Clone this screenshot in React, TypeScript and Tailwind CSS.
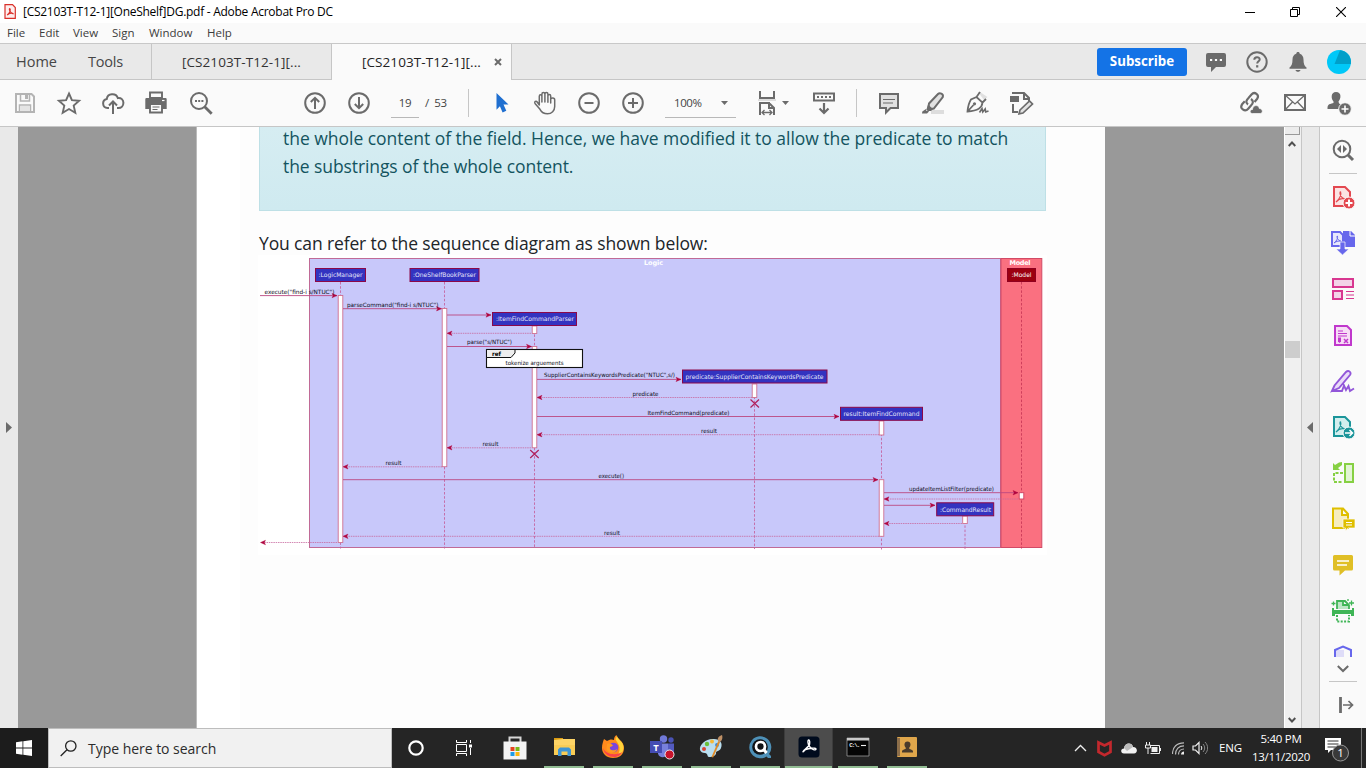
import React from "react";

const G = "#6b6b6b";

function Ic({ children, w = 24, h = 24 }: { children: React.ReactNode; w?: number; h?: number }) {
  return (
    <svg width={w} height={h} viewBox={`0 0 ${w} ${h}`} fill="none" className="block shrink-0 overflow-visible">
      {children}
    </svg>
  );
}

function Cell({ children }: { children: React.ReactNode }) {
  return <div className="flex w-[44px] shrink-0 justify-center">{children}</div>;
}

function TitleBar() {
  return (
    <div className="flex h-[23px] items-center bg-white">
      <div className="ml-[4px] w-[12px]">
        <svg width="12" height="15" viewBox="0 0 12 15" fill="none" className="block">
          <path d="M1 .7h7.5L11.3 3.500v10.800H1z" fill="#fdeeee" stroke="#d9302a" strokeWidth="1.200" />
          <path d="M3.200 11c3-2 3.500-5.500 2.700-6.300-1-.4-.8 3.800 3.600 5.200-1.800-1-4.500-.6-6.300 1.100z" stroke="#d9302a" strokeWidth="1.200" />
        </svg>
      </div>
      <span className="ml-[7px] w-[1200px] whitespace-nowrap text-[12px] leading-[23px] tracking-[-0.27px] text-black">
        [CS2103T-T12-1][OneShelf]DG.pdf - Adobe Acrobat Pro DC
      </span>
      <div className="ml-auto flex w-[139px] shrink-0 items-center">
        <div className="flex w-[46px] justify-center"><svg width="10" height="10" viewBox="0 0 10 10"><path d="M0 5.500h10" stroke="#000" /></svg></div>
        <div className="flex w-[44px] justify-center"><svg width="10" height="10" viewBox="0 0 10 10" fill="none"><path d="M.5 2.500h7v7h-7zM2.500 2.500v-2h7v7h-2" stroke="#000" /></svg></div>
        <div className="flex w-[48px] justify-center"><svg width="10" height="10" viewBox="0 0 10 10"><path d="M0 0l10 10M10 0L0 10" stroke="#000" strokeWidth="1.100" /></svg></div>
      </div>
    </div>
  );
}

function MenuBar() {
  return (
    <div className="flex h-[21px] border-b border-[#c8c8c8] bg-[#fafafa] pl-[7px] text-[11.500px] leading-[20px] text-[#3c3c3c]">
      <span className="w-[32px]">File</span>
      <span className="w-[34px]">Edit</span>
      <span className="w-[39px]">View</span>
      <span className="w-[37px]">Sign</span>
      <span className="w-[58px]">Window</span>
      <span>Help</span>
    </div>
  );
}

function TabBar() {
  return (
    <div className="flex h-[36px] bg-[#e9e9e9] text-[#464646]">
      <div className="flex w-[152px] shrink-0 border-r border-b border-[#c6c6c6] pl-[16px] text-[14.500px] leading-[35px]">
        <span className="w-[72px]">Home</span>
        <span className="tracking-[-0.2px]">Tools</span>
      </div>
      <div className="w-[180px] shrink-0 whitespace-nowrap border-r border-b border-[#c6c6c6] pl-[30px] text-[13.500px] leading-[36px] tracking-[0.08px] text-[#333]">[CS2103T-T12-1][...</div>
      <div className="flex w-[180px] shrink-0 items-center border-r border-[#c6c6c6] bg-[#fafafa] pl-[30px] text-[13.500px] leading-[36px] tracking-[0.08px] text-[#222]">
        <span className="w-[132px] whitespace-nowrap">[CS2103T-T12-1][...</span>
        <svg width="8" height="8" viewBox="0 0 8 8"><path d="M1 1l6 6M7 1L1 7" stroke="#6b6b6b" strokeWidth="2" /></svg>
      </div>
      <div className="flex flex-1 items-center border-b border-[#c6c6c6]">
        <div className="ml-[585px] flex h-[28px] w-[90px] shrink-0 items-center justify-center rounded-[3px] bg-[#1473e6] text-[13.300px] font-bold text-white">Subscribe</div>
        <div className="ml-[8px] flex shrink-0">
          <div className="flex w-[41px] justify-center">
            <Ic><path d="M4 3h16a2 2 0 0 1 2 2v10a2 2 0 0 1-2 2h-8l-5 5v-5H4a2 2 0 0 1-2-2V5a2 2 0 0 1 2-2z" fill={G} /><path d="M6 10h2.200M10.900 10h2.200M15.800 10H18" stroke="#fff" strokeWidth="2" /></Ic>
          </div>
          <div className="flex w-[41px] justify-center">
            <Ic><circle cx="12" cy="12" r="9.700" stroke={G} strokeWidth="2" /><path d="M9.300 9.800c0-3.400 5.400-3.400 5.400-.4 0 1.800-2.500 2-2.500 4.100" stroke={G} strokeWidth="2" /><path d="M11.100 15.200h2.200v2.300h-2.200z" fill={G} /></Ic>
          </div>
          <div className="flex w-[41px] justify-center">
            <Ic><path d="M12 2c1.100 0 1.700.7 1.700 1.700 2.600.8 3.800 3 3.800 5.800 0 4.200.8 6.500 3 8.100v1.100H3.500v-1.100c2.200-1.600 3-3.900 3-8.100 0-2.800 1.200-5 3.800-5.800C10.300 2.700 10.900 2 12 2zM9.500 20h5c-.3 2.400-4.700 2.400-5 0z" fill={G} /></Ic>
          </div>
          <div className="flex w-[42px] justify-center">
            <Ic><circle cx="12" cy="12" r="12" fill="#00c8f8" /><path d="M7.500 14L13 .2A12 12 0 0 1 23.800 14z" fill="#009fc9" /></Ic>
          </div>
        </div>
      </div>
    </div>
  );
}

function Toolbar() {
  return (
    <div className="flex h-[47px] items-center border-b border-[#c6c6c6] bg-[#fafafa] pl-[3px] text-[11.500px] text-[#444]">
      <Cell><Ic><path d="M3 3h15.500L21 5.500V21H3z" stroke="#b4b4b4" strokeWidth="2" /><path d="M7.500 3v7h9V3M6.500 21v-7h11v7" stroke="#b4b4b4" strokeWidth="1.500" /><path d="M12 4h3v4h-3z" fill="#b4b4b4" /><path d="M7 15h10v5H7z" fill="#e4e4e4" /></Ic></Cell>
      <Cell><Ic><path d="M12 2.500l2.900 6.600 7.200.7-5.400 4.800 1.600 7.100L12 18l-6.300 3.700 1.600-7.100L1.900 9.800l7.200-.7z" stroke={G} strokeWidth="1.900" /></Ic></Cell>
      <Cell><Ic><path d="M8 17H6.500a4.600 4.600 0 0 1-.7-9.100C6.500 2.200 15 1.500 16.800 7c3.400-.6 5.600 2 5.600 4.700 0 3-2 5.300-5 5.300H16" stroke={G} strokeWidth="2" /><path d="M12 23V11M8 14.500l4-4 4 4" stroke={G} strokeWidth="2" /></Ic></Cell>
      <Cell><div className="mr-[2px]"><Ic><path d="M6 1.500h12V7H6z" stroke={G} strokeWidth="1.900" /><path d="M2.500 7h19a1.200 1.200 0 0 1 1.200 1.200V18H1.300V8.200A1.200 1.200 0 0 1 2.500 7z" fill={G} /><path d="M6 13h12v8.500H6z" fill="#fafafa" stroke={G} strokeWidth="1.900" /><path d="M8.500 16h7M8.500 18.500h5" stroke={G} /><path d="M18 9.500h2.500" stroke="#fff" strokeWidth="1.200" /></Ic></div></Cell>
      <Cell><Ic><circle cx="10" cy="10" r="8" stroke={G} strokeWidth="2" /><path d="M15.700 15.700l7 7" stroke={G} strokeWidth="2.800" /><path d="M6 10h2M9.200 10h2M12.400 10h2" stroke={G} strokeWidth="2" /></Ic></Cell>
      <div className="w-[70px]" />
      <Cell><Ic><circle cx="12" cy="12" r="9.800" stroke={G} strokeWidth="2" /><path d="M12 18V7M7.800 11l4.200-4.200 4.200 4.200" stroke={G} strokeWidth="2" /></Ic></Cell>
      <Cell><Ic><circle cx="12" cy="12" r="9.800" stroke={G} strokeWidth="2" /><path d="M12 6v11M7.800 13l4.200 4.200 4.200-4.200" stroke={G} strokeWidth="2" /></Ic></Cell>
      <div className="ml-[10px] mt-px flex h-[28px] w-[28px] items-center justify-center border-b border-[#b8b8b8] tracking-[-0.4px]">19</div>
      <span className="ml-[6px] w-[43px] whitespace-pre tracking-[-0.3px]">/  53</span>
      <div className="h-[28px] w-px bg-[#c6c6c6]" />
      <div className="w-[10px]" />
      <Cell><Ic><path d="M7.500 2l12 11.600h-5l2.800 6.200-3.700 1.600-2.700-6.100-3.400 3.500z" fill="#1f6fd0" /></Ic></Cell>
      <Cell><Ic><path d="M6.300 14V5.200c0-2 2.600-2 2.600 0V11 3.200c0-2.200 3-2.200 3 0V11 3c0-2.100 3-2.100 3 0v8.300V5c0-2 2.800-2 2.800 0v7-3.500c0-2 4-2 4 .5v6.500c0 4-3 7.300-7.200 7.300-4 0-6-1.500-7.500-4.500L2 12.500c-1-1.900 1-3 2.200-1.500z" stroke={G} strokeWidth="1.500" strokeLinejoin="round" /></Ic></Cell>
      <Cell><Ic><circle cx="12" cy="12" r="9.800" stroke={G} strokeWidth="2" /><path d="M7.500 12h9" stroke={G} strokeWidth="2" /></Ic></Cell>
      <Cell><Ic><circle cx="12" cy="12" r="9.800" stroke={G} strokeWidth="2" /><path d="M7 12h10M12 7v10" stroke={G} strokeWidth="2" /></Ic></Cell>
      <div className="ml-[10px] mt-px flex h-[28px] w-[71px] items-center justify-between border-b border-[#b8b8b8] pr-[8px] pl-[9px]">
        <span className="tracking-[-0.45px]">100%</span>
        <svg width="7" height="4" viewBox="0 0 7 4"><path d="M0 0h7L3.500 4z" fill={G} /></svg>
      </div>
      <div className="ml-[22px] flex w-[32px] items-center gap-[6px]">
        <Ic w={18}><path d="M2 0v7h14V0" stroke={G} strokeWidth="2" /><path d="M0 9h18" stroke="#ddd" strokeWidth="2" /><path d="M2 24V12h9l5 5v7M11 11v6h5" stroke={G} strokeWidth="2" /><path d="M4 21.500h10M6.500 19L4 21.500 6.500 24M11.500 19l2.500 2.500-2.500 2.500" stroke={G} strokeWidth="1.300" /></Ic>
        <svg width="7" height="4" viewBox="0 0 7 4" className="shrink-0"><path d="M0 0h7L3.500 4z" fill={G} /></svg>
      </div>
      <div className="ml-[22px] mr-[20px]"><Ic><path d="M2 2.500h20v7H2z" stroke={G} strokeWidth="2" /><path d="M5 6h14" stroke={G} strokeWidth="2" strokeDasharray="2 2" /><path d="M12 12v9.500M7.500 17.500l4.500 4.500 4.500-4.500" stroke={G} strokeWidth="2.200" /></Ic></div>
      <div className="h-[28px] w-px bg-[#c6c6c6]" />
      <div className="w-[10px]" />
      <Cell><Ic><path d="M3 3h18v14h-7.500L9 21.500V17H3z" fill="#e1e1e1" stroke={G} strokeWidth="2" /><path d="M6 8.500h12M6 12h10" stroke={G} strokeWidth="1.200" /></Ic></Cell>
      <Cell><Ic><path d="M10 19h13v4H10z" fill="#ddd" /><path d="M8 12.500L17 3c1.500-1.600 5.800-.6 4.800 3l-9 11.500-5.500 1z" fill="#e1e1e1" stroke={G} strokeWidth="2" /><path d="M7 13.500l5 4.500-2 2-5-.2zM5 18l-3.700 2.500L1 22.500h5l2-2z" fill={G} /></Ic></Cell>
      <Cell><Ic><path d="M13 1l6 8 3.500-3L15 1z" fill="#e0e0e0" /><path d="M2.500 20.500C3 15 4 11.500 6 8.500L11.500 6l6 5.500C17 17 13 19.500 2.500 20.500zM2.500 20.500L8.500 14M11.500 6L15 1M17.500 11.500L21 8" stroke={G} strokeWidth="1.800" /><circle cx="9.500" cy="12.800" r="1.600" fill={G} /><path d="M14.500 21.500l2.500-4 .8 3.500 2.400-3 .5 3 2.800-1" stroke={G} strokeWidth="1.600" /></Ic></Cell>
      <Cell><Ic><path d="M1 5h9v6H1z" fill={G} /><path d="M4 3V2h11l5 5v3M15 2v6h6M4 13v8h5" stroke={G} strokeWidth="2" /><path d="M11 19l9.500-9 3 3-9.500 9-4 .8z" fill="#e2e2e2" stroke={G} strokeWidth="1.700" /></Ic></Cell>
      <div className="ml-auto flex pr-[5px]">
        <Cell><Ic><path d="M9 13.500c-3-2-1.500-4.500.5-6.500l3-3.500c3-3.500 8.500.5 5.500 4.500l-2.500 3" stroke={G} strokeWidth="2.200" /><path d="M12 8c3 2 2 4.500 0 6.500l-2.800 3.300C6 21.500 0 17.500 3.300 13l2.500-2.700" stroke={G} strokeWidth="2.200" /><path d="M13.500 22.500c-3 0-3.200-4 0-4 .3-5 6.300-5 6.800-1 3.700-.2 4 5 .9 5z" fill={G} stroke="#fafafa" strokeWidth=".7" /></Ic></Cell>
        <Cell><Ic><path d="M2 4h20v15H2z" stroke={G} strokeWidth="2" /><path d="M2 4l10 9 10-9M2 19l7.500-8M22 19l-7.500-8" stroke={G} strokeWidth="1.300" /></Ic></Cell>
        <Cell><Ic><path d="M9 1c6 0 5 7 2.500 9.500.3 2 1 2.700 3.500 3.500v4H.5c0-4 .5-4.800 6-6V10.500C4 8 3.500 1 9 1z" fill={G} /><circle cx="18" cy="18" r="6.300" fill={G} stroke="#fafafa" /><path d="M14.500 18h7M18 14.500v7" stroke="#fff" strokeWidth="1.600" /></Ic></Cell>
      </div>
    </div>
  );
}

type Label = [x: number, y: number, w: number, text: string];
const labels: Label[] = [
  [264.5, 294, 70, 'execute("find-i s/NTUC")'],
  [347, 306.500, 91.500, 'parseCommand("find-i s/NTUC")'],
  [467, 344, 45, 'parse("s/NTUC")'],
  [505.5, 364.700, 58, "tokenize arguements"],
  [544, 377.200, 131, 'SupplierContainsKeywordsPredicate("NTUC",s/)'],
  [632.500, 395.500, 26, "predicate"],
  [647.500, 414.500, 82, "ItemFindCommand(predicate)"],
  [701, 433, 16, "result"],
  [482.500, 446, 16, "result"],
  [385.500, 465, 16, "result"],
  [598.500, 478, 25.500, "execute()"],
  [909, 491, 85, "updateItemListFilter(predicate)"],
  [604, 534.500, 16, "result"],
];
type Box = [x: number, y: number, w: number, tx: number, tw: number, text: string];
const boxes: Box[] = [
  [315, 268, 51, 318.500, 44, ":LogicManager"],
  [409.5, 268, 70, 413, 63, ":OneShelfBookParser"],
  [492, 312, 85, 496, 78, ":ItemFindCommandParser"],
  [682, 369.500, 145.500, 685.500, 138, "predicate:SupplierContainsKeywordsPredicate"],
  [840, 406.800, 83, 843.500, 76, "result:ItemFindCommand"],
  [936.200, 502.300, 58, 940, 51, ":CommandResult"],
];
type Seg = [from: number, to: number, y: number];
const solid: Seg[] = [
  [260, 337, 295.600], [343, 441.500, 308.700], [447, 491, 315], [447, 531.500, 346.500], [537, 681, 379.400],
  [537, 839, 416.500], [343, 878, 479.700], [884, 1018, 492.700], [884, 935, 505.300],
];
const dashed: Seg[] = [
  [531, 448, 333.300], [752, 538, 397.500], [879, 538, 434.700], [531, 448, 447.800], [442, 344, 466.800],
  [1018, 885, 499], [962, 885, 523.500], [879, 344, 536.300], [337, 261.500, 542.500],
];

function Head({ x, y, left }: { x: number; y: number; left?: boolean }) {
  const s = left ? 1 : -1;
  return <path d={`M${x} ${y}l${5 * s} -2.200l${-1.200 * s} 2.200l${1.200 * s} 2.200z`} fill="#b0053f" stroke="#b0053f" strokeWidth=".4" />;
}

function Diagram() {
  const life: [number, number, number][] = [[340.500, 282, 548.500], [444.500, 282, 548.500], [534.500, 326, 548.500], [754.500, 384, 549], [881.500, 421, 550], [965, 517, 549]];
  const act: [number, number, number][] = [[340.500, 295.500, 542.500], [444.500, 308.500, 466.700], [534.500, 326, 333.500], [534.500, 346.500, 447.800], [754.500, 384, 397.500], [881.500, 421, 435], [881.500, 479.700, 536.300], [965, 516, 523.500]];
  return (
    <svg width="789" height="300" viewBox="258 255 789 300" className="block bg-white" fontFamily="'DejaVu Sans', 'Noto Sans', sans-serif" fontSize="5.800">
      <rect x="309.500" y="258.500" width="691" height="289" fill="#c8c8fa" stroke="#c06a96" />
      <rect x="1001" y="258.500" width="40.800" height="289" fill="#fa7080" stroke="#d24a66" />
      <text x="644" y="265" fill="#fff" fontSize="6.500" fontWeight="bold" textLength="19">Logic</text>
      <text x="1009.500" y="265" fill="#fff" fontSize="6.500" fontWeight="bold" textLength="21">Model</text>
      {life.map(([x, a, b]) => <path key={x} d={`M${x} ${a}V${b}`} stroke="#c464a0" strokeDasharray="2.500 1.700" strokeWidth=".9" />)}
      <path d="M1021.500 282V548.500" stroke="#cf3f5c" strokeDasharray="2.500 1.700" />
      {act.map(([x, a, b]) => <rect key={`${x}-${a}`} x={x - 2.300} y={a} width="4.600" height={b - a} fill="#fff" stroke="#d07090" strokeWidth=".9" />)}
      <rect x="1019.200" y="492.700" width="4.600" height="6.300" fill="#fff" stroke="#d04060" strokeWidth=".9" />
      {solid.map(([a, b, y]) => <g key={y}><path d={`M${a} ${y}H${b}`} stroke="#bb4880" strokeWidth=".9" /><Head x={b} y={y} /></g>)}
      {dashed.map(([a, b, y]) => <g key={y}><path d={`M${a} ${y}H${b}`} stroke="#c86aa0" strokeWidth=".8" strokeDasharray="1.500 .8" /><Head x={b - 1} y={y} left /></g>)}
      <rect x="486.500" y="349.500" width="96" height="18" fill="#fff" stroke="#111" strokeWidth="1.100" />
      <path d="M486.500 349.500h28.500v3.500l-4 4.500h-24.500z" fill="#eee" stroke="#111" />
      <text x="492" y="356" fontSize="6" fontWeight="bold" textLength="9" lengthAdjust="spacingAndGlyphs">ref</text>
      {boxes.map(([x, y, w, tx, tw, t]) => (
        <g key={t}>
          <rect x={x + .5} y={y + .5} width={w - 1} height="13" fill="#3333c0" stroke="#8c0848" />
          <text x={tx} y={y + 9.200} fill="#e6e6fa" fontSize="6.200" textLength={tw} lengthAdjust="spacingAndGlyphs">{t}</text>
        </g>
      ))}
      <rect x="1007.500" y="268.500" width="28" height="13" fill="#9c0010" stroke="#900020" />
      <text x="1011.500" y="277.200" fill="#fff" fontSize="6.200" textLength="20" lengthAdjust="spacingAndGlyphs">:Model</text>
      {labels.map(([x, y, w, t]) => <text key={`${x}-${y}`} x={x} y={y} fill="#0c0c18" textLength={w} lengthAdjust="spacingAndGlyphs">{t}</text>)}
      <path d="M750.500 399.500l8.500 8m0-8l-8.500 8M530.200 450l8.500 8m0-8l-8.500 8" stroke="#b0205c" strokeWidth="1.200" />
    </svg>
  );
}

function Page() {
  return (
    <div className="flex w-[909px] shrink-0 border-l border-[#bbb] bg-white">
      <div className="ml-[43px] flex-1 bg-[#fdfdfd] pl-[19px]">
        <div className="h-[84px] w-[787px] border border-t-0 border-[#bee0e6] bg-linear-to-b from-[#d6edf2] to-[#cfeaf0] pl-[23px] text-[17.500px] tracking-[-0.025px] text-[#13545f]">
          <div className="whitespace-nowrap leading-[22px]">the whole content of the field. Hence, we have modified it to allow the predicate to match</div>
          <div className="mt-[3px] whitespace-nowrap leading-[28px] tracking-[-0.09px]">the substrings of the whole content.</div>
        </div>
        <div className="mt-[19px] h-[25px] whitespace-nowrap text-[17.500px] leading-[27px] tracking-[-0.13px] text-[#212529]">You can refer to the sequence diagram as shown below:</div>
        <div className="-ml-px"><Diagram /></div>
      </div>
    </div>
  );
}

function SideCell({ children }: { children: React.ReactNode }) {
  return <div className="flex h-[46px] shrink-0 items-center justify-center">{children}</div>;
}

const pdfGlyph = "M5 17c4-3 5.500-8 4.600-10-1-.8-1.500 5.500 5 7.300-3-1.300-7-.3-9.600 2.700z";

function SidePanel() {
  return (
    <div className="flex w-[46px] flex-col bg-[#fafafa]">
      <SideCell><Ic><circle cx="11" cy="11" r="8.300" stroke={G} strokeWidth="2" /><path d="M17 17l5 5" stroke={G} strokeWidth="3" /><path d="M10 7v8l-4-4zM12 7v8l4-4z" fill={G} /></Ic></SideCell>
      <div className="mx-auto h-px w-[28px] bg-[#c6c6c6]" />
      <SideCell><Ic><path d="M3 2h11l5 5v14H3z" fill="#fbe3e3" stroke="#e34850" strokeWidth="2" /><path d={pdfGlyph} stroke="#e34850" strokeWidth="1.200" /><circle cx="18" cy="18" r="6" fill="#e34850" stroke="#fafafa" /><path d="M14.500 18h7M18 14.500v7" stroke="#fff" strokeWidth="2" /></Ic></SideCell>
      <SideCell><Ic><path d="M12 0h8l4 4v12H12z" fill="#6767ec" /><path d="M19 0v5h5" stroke="#fff" /><path d="M1 1h8l3 3v11H1z" fill="#e6e6fc" stroke="#6767ec" strokeWidth="2" /><path d="M3 12c3-2 4-5.500 3.500-7-1-.5-1 4 4 5.500-2-1-5-.5-7.500 1.500z" stroke="#6767ec" /><path d="M9 11h5v7h4l-6.500 6L5 18h4z" fill="#6767ec" stroke="#fafafa" strokeWidth=".7" /></Ic></SideCell>
      <SideCell><Ic><path d="M2 2h20v8H2zM2 14h9v8H2z" fill="#f3d3e8" stroke="#d83790" strokeWidth="2" /><path d="M15 14.500h8M15 18h8M15 21.500h8" stroke="#d83790" strokeWidth="1.100" /></Ic></SideCell>
      <SideCell><Ic><path d="M4 3h12l4 4v15H4z" fill="#f7ddf6" stroke="#c038cc" strokeWidth="2" /><path d="M7 8h5M7 10.500h9M7 13h9" stroke="#c038cc" strokeWidth="1.200" /><path d="M7 14.500h3v4L8.500 20 7 18.500z" fill="#c038cc" /><path d="M13 16l4 4m0-4l-4 4" stroke="#c038cc" strokeWidth="1.500" /></Ic></SideCell>
      <SideCell><Ic><path d="M2 22l2-6L15 3c2.500-2.500 6 .5 4 3L8 19z" fill="#eadbf9" /><path d="M1 22l2.500-5.500L15 3c2.500-2.500 6 .5 4 3L8 19zM1 22h10l2-5.500L15 21l2.500-4L19 22l4-2.500" stroke="#9256d9" strokeWidth="1.900" /></Ic></SideCell>
      <SideCell><Ic><path d="M3 2h11l5 5v14H3z" fill="#d2eeee" stroke="#1b959a" strokeWidth="2" /><path d={pdfGlyph} stroke="#1b959a" strokeWidth="1.200" /><circle cx="18" cy="18" r="6" fill="#1b959a" stroke="#fafafa" /><path d="M14 18h7M18.500 15l3 3-3 3" stroke="#fff" strokeWidth="1.500" /></Ic></SideCell>
      <SideCell><Ic><path d="M14 3h8v18h-8z" fill="#e2f5d4" stroke="#86d043" strokeWidth="2" /><path d="M12 12H3v9h9" stroke="#86d043" strokeWidth="2" strokeDasharray="3 1.500" /><path d="M11 1v3L7 7l2 2H2V2l2 2 4-2.500z" fill="#86d043" /></Ic></SideCell>
      <SideCell><Ic><path d="M2 1.500h10l5 5.500v14H2zM11 2v6h6" fill="#f6edbf" stroke="#dfbf00" strokeWidth="2" /><path d="M12 12h12v9h-7l-2.500 3v-3H12z" fill="#dfbf00" stroke="#fafafa" strokeWidth=".7" /><path d="M15 15.500h6M15 18h6" stroke="#fff" strokeWidth="1.100" /></Ic></SideCell>
      <SideCell><Ic><path d="M3.500 2h17A1.500 1.500 0 0 1 22 3.500V16a1.500 1.500 0 0 1-1.500 1.500H14L8.500 22.500v-5h-5A1.500 1.500 0 0 1 2 16V3.500A1.500 1.500 0 0 1 3.500 2z" fill="#e0bf26" /><path d="M6 8h12M6 12h10" stroke="#fff" strokeWidth="1.600" /></Ic></SideCell>
      <SideCell><Ic><path d="M6 10V2h8l4 4v4M12 2v4h5" fill="#bce6c5" stroke="#3fb556" strokeWidth="1.800" /><path d="M1 9h2v2h18V9h2v8h-3v-2H4v2H1z" fill="#3fb556" /><path d="M6 16v6.500h12V16" stroke="#3fb556" strokeWidth="2" strokeDasharray="2 1.400" /><path d="M2.500 2.500v4M.5 4.500h4M20.500 1.500v5M18 4h5M17 0v2" stroke="#3fb556" strokeWidth="1.300" /></Ic></SideCell>
      <div className="flex h-[23px] justify-center overflow-hidden pt-[11px]">
        <svg width="20" height="20" viewBox="0 0 20 20" className="shrink-0"><path d="M2 5h9v16H2z" fill="#dedcf8" /><path d="M2 20V5l8-3.500L18 5v15" fill="none" stroke="#6767ec" strokeWidth="2" /></svg>
      </div>
      <div className="flex h-[24px] items-center justify-center"><svg width="12" height="8" viewBox="0 0 12 8"><path d="M.8 1l5.200 5 5.200-5" fill="none" stroke={G} strokeWidth="2" /></svg></div>
      <div className="mx-auto h-px w-[28px] bg-[#c6c6c6]" />
      <SideCell><Ic><path d="M9.500 4v16" stroke={G} strokeWidth="2.800" /><path d="M12 12h9M17.500 8l4 4-4 4" stroke={G} strokeWidth="1.700" /></Ic></SideCell>
    </div>
  );
}

function Viewer() {
  return (
    <div className="flex h-[601px] overflow-hidden bg-[#999]">
      <div className="flex w-[18px] shrink-0 items-center justify-center bg-[#e9e9e9]">
        <svg width="6" height="11" viewBox="0 0 6 11"><path d="M0 0v11l6-5.500z" fill="#6b6b6b" /></svg>
      </div>
      <div className="w-[178px] shrink-0" />
      <Page />
      <div className="w-[179px] shrink-0" />
      <div className="flex w-[17px] shrink-0 flex-col items-center border-l border-white bg-[#f0f0f0] pr-px">
        <div className="h-[8px] w-full border-r border-b border-[#999] bg-[#ececec]" />
        <svg width="8" height="6" viewBox="0 0 8 6" className="mt-[6px] mr-px shrink-0"><path d="M.7 5L4 1.500 7.300 5" fill="none" stroke="#505050" strokeWidth="1.900" /></svg>
        <div className="mt-[194px] h-[17px] w-[15px] shrink-0 bg-[#cdcdcd]" />
        <svg width="8" height="6" viewBox="0 0 8 6" className="mt-auto mr-px mb-[5px] shrink-0"><path d="M.7 1L4 4.500 7.300 1" fill="none" stroke="#505050" strokeWidth="1.900" /></svg>
      </div>
      <div className="flex w-[19px] shrink-0 items-center justify-center border-x border-[#c6c6c6] bg-[#e9e9e9] pr-px">
        <svg width="6" height="11" viewBox="0 0 6 11"><path d="M6 0v11L0 5.500z" fill="#6b6b6b" /></svg>
      </div>
      <SidePanel />
    </div>
  );
}

function TaskApp({ children, active }: { children: React.ReactNode; active?: boolean }) {
  return (
    <div className={active ? "flex w-[49px] shrink-0 flex-col items-center border-x border-[#3c3c3c] bg-[#4c4c4c]" : "flex w-[49px] shrink-0 flex-col items-center"}>
      <div className="flex h-[38px] items-center">{children}</div>
      <div className={active ? "h-[2px] w-full bg-[#92bd93]" : "h-[2px] w-[40px] bg-[#92bd93]"} />
    </div>
  );
}

function Taskbar() {
  return (
    <div className="flex h-[40px] bg-[#252525] text-white">
      <div className="flex w-[48px] items-center justify-center bg-[#1c1c1c]">
        <svg width="16" height="16" viewBox="0 0 16 16"><path d="M0 2.200L6.500 1.300v6.300H0zM7.300 1.200L16 0v7.600H7.300zM0 8.400h6.500v6.300L0 13.800zM7.300 8.400H16V16l-8.700-1.200z" fill="#fff" /></svg>
      </div>
      <div className="flex w-[344px] items-center border border-[#bdbdbd] bg-[#f1f1f1] pl-[11px] text-[#2c2c2c]">
        <svg width="17" height="17" viewBox="0 0 17 17" fill="none"><circle cx="10.800" cy="6" r="5.200" stroke="#222" strokeWidth="1.300" /><path d="M7 9.700L.7 16" stroke="#222" strokeWidth="1.300" /></svg>
        <span className="ml-[11px] text-[14px] tracking-[-0.03px]">Type here to search</span>
      </div>
      <div className="flex w-[48px] items-center justify-center"><svg width="16" height="16" viewBox="0 0 16 16"><circle cx="8" cy="8" r="6.700" fill="none" stroke="#fff" strokeWidth="2.200" /></svg></div>
      <div className="flex w-[50px] items-center justify-center pr-[2px]"><svg width="16" height="16" viewBox="0 0 16 16" fill="none"><path d="M.5 0v2.500h10V0M.5 16v-2.500h10V16M.5 4.500h10v7H.5zM14.500 0v3M14.500 8v7" stroke="#fff" /><path d="M13 4.500h3v3h-3z" fill="#fff" /></svg></div>
      <div className="flex w-[49px] items-center justify-center"><Ic><path d="M6.500 6V1.500h11V6" stroke="#d8d8d8" strokeWidth="2" /><path d="M.5 5.500h23v18H.5z" fill="#f3f3f3" /><path d="M7.500 11h4v4h-4z" fill="#e5431f" /><path d="M12.500 11h4v4h-4z" fill="#78b817" /><path d="M7.500 16h4v4h-4z" fill="#1f9ce5" /><path d="M12.500 16h4v4h-4z" fill="#fdb70d" /></Ic></div>
      <TaskApp><Ic><path d="M2 3h9v3H2z" fill="#d99a11" /><path d="M2 5l9-1h12v16H2z" fill="#fdd466" /><path d="M2 10h21v10H2z" fill="#f9cc55" /><path d="M6 21v-6.500l2-2h9l2 2V21h-3.500v-4.500h-6V21z" fill="#3e95d5" /></Ic></TaskApp>
      <TaskApp><Ic><path d="M3 4l3 2c2-1.500 5-2 7-1 0-2 .5-4 2.500-5 .5 4 7.500 6 7.500 13S18 23 12 23 1 19 1 13C1 9 2 7 3 4z" fill="#ff8a1c" /><path d="M16 1c1 4 7 6 6.500 12-.5 5-3.500 8-8 9.500 3-3 4.500-6.500 4-10S15 6 14.500 4z" fill="#ffd43b" /><path d="M2 13c1 6 6 9 11 9 4 0 7-2 8-5-4 3-15 4-19-4z" fill="#f8434a" /><circle cx="12.500" cy="12.500" r="4.800" fill="#7a45dd" /><path d="M6 9c2-1 5 0 6 1.500-1 1-2 1-3 1.500-1 4 5 4 7 2-1 5-9 5-10.500 0z" fill="#ff9a20" /></Ic></TaskApp>
      <TaskApp><Ic><circle cx="13.500" cy="4" r="3.700" fill="#7079d8" /><circle cx="21" cy="5" r="2.700" fill="#4a53b5" /><path d="M8 8.500h10v10c-2 5-9 5-10 0z" fill="#7880dc" /><path d="M18 8.500h6v8c0 4-6 4-6 0z" fill="#535bc0" /><path d="M0 6h12v12H0z" fill="#454db3" /><text x="3.200" y="15.500" fill="#fff" fontSize="9.500" fontWeight="bold">T</text><circle cx="19.500" cy="19.500" r="4.500" fill="#c9142c" stroke="#eee" /></Ic></TaskApp>
      <TaskApp><Ic><path d="M1 15C0 9 8 3 15 4c6 0 9 4 7 9-1 3-4 3-5 4 1 3-3 5-7 5-2 0-1-4-4-4s-4-1-5-3z" fill="#b9deef" /><circle cx="13" cy="6.500" r="2" fill="#f6b834" /><circle cx="8" cy="9" r="2.200" fill="#6ac13a" /><circle cx="5" cy="14" r="2" fill="#d94435" /><circle cx="18" cy="10" r="1.900" fill="#3784d0" /><path d="M12.500 22l6.800-16 1.800 1-7 15.500z" fill="#e08b28" /><path d="M19 6c-1-3 1-5 4-6 1 3 0 6-2.500 7z" fill="#be9066" /></Ic></TaskApp>
      <TaskApp><Ic><path d="M5 20.500A11 11 0 1 1 21 19l2 2v2h-3l-1.500-1.500A11 11 0 0 1 5 20.500z" fill="#4e91b8" /><circle cx="12" cy="12" r="7.800" fill="#101316" /><circle cx="12.500" cy="11.500" r="4.500" stroke="#fff" strokeWidth="2.700" /><path d="M15.500 14l3 4" stroke="#fff" strokeWidth="3" /></Ic></TaskApp>
      <TaskApp active><Ic><rect x="1.500" y="1.500" width="21" height="21" rx="3.500" fill="#000b1d" /><path d="M6 16.500c0-1.500 6-4.500 6.500-7 .3-1.500.4-4.500-.8-4.500s-1 4 .8 6.500c2 2.800 6.500 4.500 6.500 2.500 0-1.500-7-.8-10.500.7C7 15.500 6 17.500 6 16.500z" stroke="#fff" strokeWidth="1.400" /></Ic></TaskApp>
      <TaskApp><Ic><path d="M1 3h22v18H1z" fill="#050505" stroke="#999" strokeWidth=".8" /><path d="M1 3h22v2.500H1z" fill="#c9c9c9" /><text x="3.300" y="11.500" fill="#eee" fontFamily="'Liberation Mono', monospace" fontSize="6" fontWeight="bold" textLength="11">C:\.</text><path d="M15 10.500h5" stroke="#eee" strokeWidth="1.100" /></Ic></TaskApp>
      <TaskApp><Ic><rect x="2" y="2" width="20" height="20" rx="1" fill="#dfa64b" /><path d="M2 3h3v18H2z" fill="#8c6e4a" /><path d="M12.500 6.500c4 0 3.500 5 1.500 6.500.2 1.500 4 1.500 4 3.500v1H7v-1c0-2 3.800-2 4-3.500-2-1.500-2.500-6.500 1.500-6.500z" fill="#493b2b" /></Ic></TaskApp>
      <div className="ml-auto flex items-center">
        <svg width="13" height="8" viewBox="0 0 13 8" className="mr-[10px]"><path d="M1 7l5.500-5.500L12 7" fill="none" stroke="#eee" strokeWidth="1.300" /></svg>
        <svg width="15" height="17" viewBox="0 0 15 17" className="mr-[9px]"><path d="M1.500 2.500l6 3 6-3v9.500l-6 3.300-6-3.300z" fill="none" stroke="#c3282d" strokeWidth="2.700" /></svg>
        <svg width="16" height="11" viewBox="0 0 16 11" className="mr-[8px]"><path d="M3 10.500C-1 10-.5 5.500 3 5.500 3.500-.5 11-1 12 4c5 0 5 6.500 1 6.500z" fill="#f2f2f2" /><path d="M3 5C4-.5 11-1 12 4L6 8z" fill="#bbb" /></svg>
        <svg width="16" height="13" viewBox="0 0 16 13" className="mr-[11px]" fill="none"><path d="M1.500 0v3M4.500 0v3M.5 3h5v3h-5zM3 6v6" stroke="#eee" /><path d="M5.500 3.500h9v8h-9M15.500 6v3" stroke="#eee" /><path d="M6.500 5h6v5h-6z" fill="#eee" /></svg>
        <svg width="13" height="13" viewBox="0 0 13 13" className="mr-[7px]" fill="none"><path d="M.5 12C.5 5 5 .8 12 .8M3.500 12.500C3.500 7 7 3.800 12 3.800M6.500 12.500c0-3.500 2.500-5.500 5.500-5.500" stroke="#bbb" strokeWidth="1.200" /><path d="M9 12.500c0-2 1.500-3 3-3v3z" fill="#eee" /></svg>
        <svg width="16" height="14" viewBox="0 0 16 14" className="mr-[11px]" fill="none"><path d="M1 5h2.500L7 1.500v11L3.500 9H1z" stroke="#eee" strokeWidth="1.200" /><path d="M9 5c1 1.200 1 2.800 0 4" stroke="#eee" /><path d="M11 3c2.200 2.500 2.200 5.500 0 8M13 1c3.500 3.500 3.500 8.500 0 12" stroke="#888" /></svg>
        <span className="w-[33px] text-[11.500px] tracking-[-0.2px]">ENG</span>
        <div className="w-[58px] whitespace-nowrap text-center text-[11.500px] leading-[18px] tracking-[-0.3px]"><div>5:40 PM</div><div>13/11/2020</div></div>
        <svg width="25" height="26" viewBox="0 0 25 26" className="mt-[4px] ml-[14px] mr-[12px]"><path d="M1 1h16v12H7l-3 3v-3H1z" fill="#fff" /><path d="M3.500 4h11M3.500 7h11M3.500 10h8" stroke="#333" /><circle cx="16.500" cy="16" r="8" fill="#393939" stroke="#999" /><text x="13.300" y="20" fill="#fff" fontSize="11.500">1</text></svg>
        <div className="mr-[4px] h-[40px] w-px bg-[#777]" />
      </div>
    </div>
  );
}

export default function App() {
  return (
    <div className="h-[768px] w-[1366px] overflow-hidden bg-white font-['Open_Sans','Noto_Sans',sans-serif]">
      <TitleBar />
      <MenuBar />
      <TabBar />
      <Toolbar />
      <Viewer />
      <Taskbar />
    </div>
  );
}
